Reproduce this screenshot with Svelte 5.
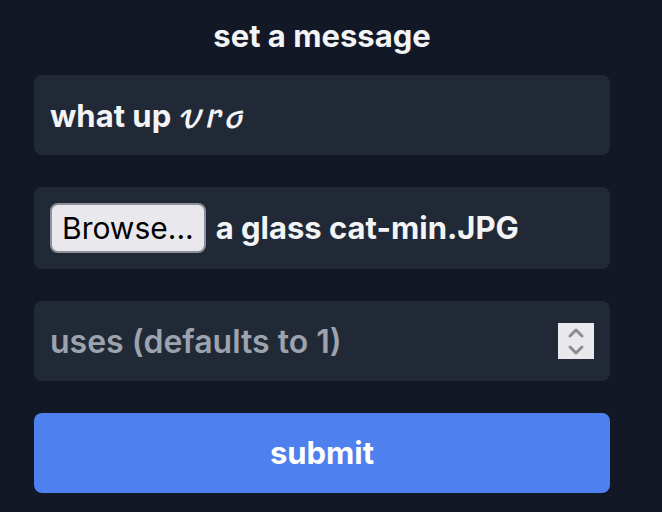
<script>
  let message = $state('what up 𝓋𝓇ℴ');
  let uses = $state(null);
  let fileName = $state('a glass cat-min.JPG');
  let picker;

  function pick(event) {
    fileName = event.currentTarget.files[0]?.name ?? 'No file selected.';
  }

  function step(amount) {
    uses = Math.max(1, (uses ?? 0) + amount);
  }
</script>

<form onsubmit={(event) => event.preventDefault()}>
  <label class="title" for="message">set a message</label>
  <input class="field" id="message" type="text" bind:value={message} />

  <div class="field file">
    <input
      class="hidden"
      type="file"
      aria-label="attachment"
      tabindex="-1"
      bind:this={picker}
      onchange={pick}
    />
    <button class="browse" type="button" onclick={() => picker.click()}>Browse...</button>
    <span>{fileName}</span>
  </div>

  <div class="field number">
    <input
      type="number"
      min="1"
      aria-label="uses"
      placeholder="uses (defaults to 1)"
      bind:value={uses}
    />
    <div class="spinner">
      <button type="button" aria-label="increase" onclick={() => step(1)}>
        <svg viewBox="0 0 18 12"><path d="M3 9l6-6 6 6" /></svg>
      </button>
      <button type="button" aria-label="decrease" onclick={() => step(-1)}>
        <svg viewBox="0 0 18 12"><path d="M3 3l6 6 6-6" /></svg>
      </button>
    </div>
  </div>

  <button class="submit" type="submit">submit</button>
</form>

<style>
  :global(body) {
    background: #121826;
  }

  form {
    display: flex;
    flex-direction: column;
    gap: 32px;
    padding: 16px 52px 16px 34px;
    color: #f3f4f6;
    font: 700 31px/40px Inter, 'DejaVu Math TeX Gyre', sans-serif;
  }

  input,
  button {
    box-sizing: border-box;
    margin: 0;
    border: 0;
    font: inherit;
    color: inherit;
  }

  .title {
    margin-bottom: -13px;
    text-align: center;
  }

  .field {
    box-sizing: border-box;
    width: 100%;
    min-height: 80px;
    padding: 16px;
    border-radius: 8px;
    background: #222936;
  }

  input.field {
    padding: 17px 16px 15px;
  }

  .file,
  .number {
    position: relative;
    display: flex;
    align-items: center;
  }

  .file {
    gap: 10px;
  }

  .hidden {
    position: absolute;
    width: 1px;
    height: 1px;
    opacity: 0;
    pointer-events: none;
  }

  .browse {
    height: 50px;
    padding: 0 10px;
    border: 2px solid #8f8f9d;
    border-radius: 8px;
    background: #e9e9ed;
    color: #000;
    font-size: 30px;
    font-weight: 400;
  }

  .number input {
    flex: 1;
    min-width: 0;
    padding: 2px 0 0;
    background: none;
    font-size: 32px;
    font-weight: 600;
    appearance: textfield;
  }

  .number input::-webkit-inner-spin-button {
    display: none;
  }

  .number input::placeholder {
    color: #9ca3af;
    opacity: 1;
  }

  .spinner {
    box-sizing: border-box;
    display: flex;
    flex-direction: column;
    width: 36px;
    height: 36px;
    padding: 1px 0;
    background: #e9e9ed;
  }

  .spinner button {
    display: flex;
    flex: 1;
    align-items: center;
    justify-content: center;
    padding: 0;
    background: none;
  }

  svg {
    width: 18px;
    height: 12px;
    fill: none;
    stroke: #8c8c92;
    stroke-width: 3;
    stroke-linecap: round;
    stroke-linejoin: round;
  }

  .submit {
    min-height: 80px;
    border-radius: 8px;
    background: #4f81ee;
    color: #fff;
  }
</style>
